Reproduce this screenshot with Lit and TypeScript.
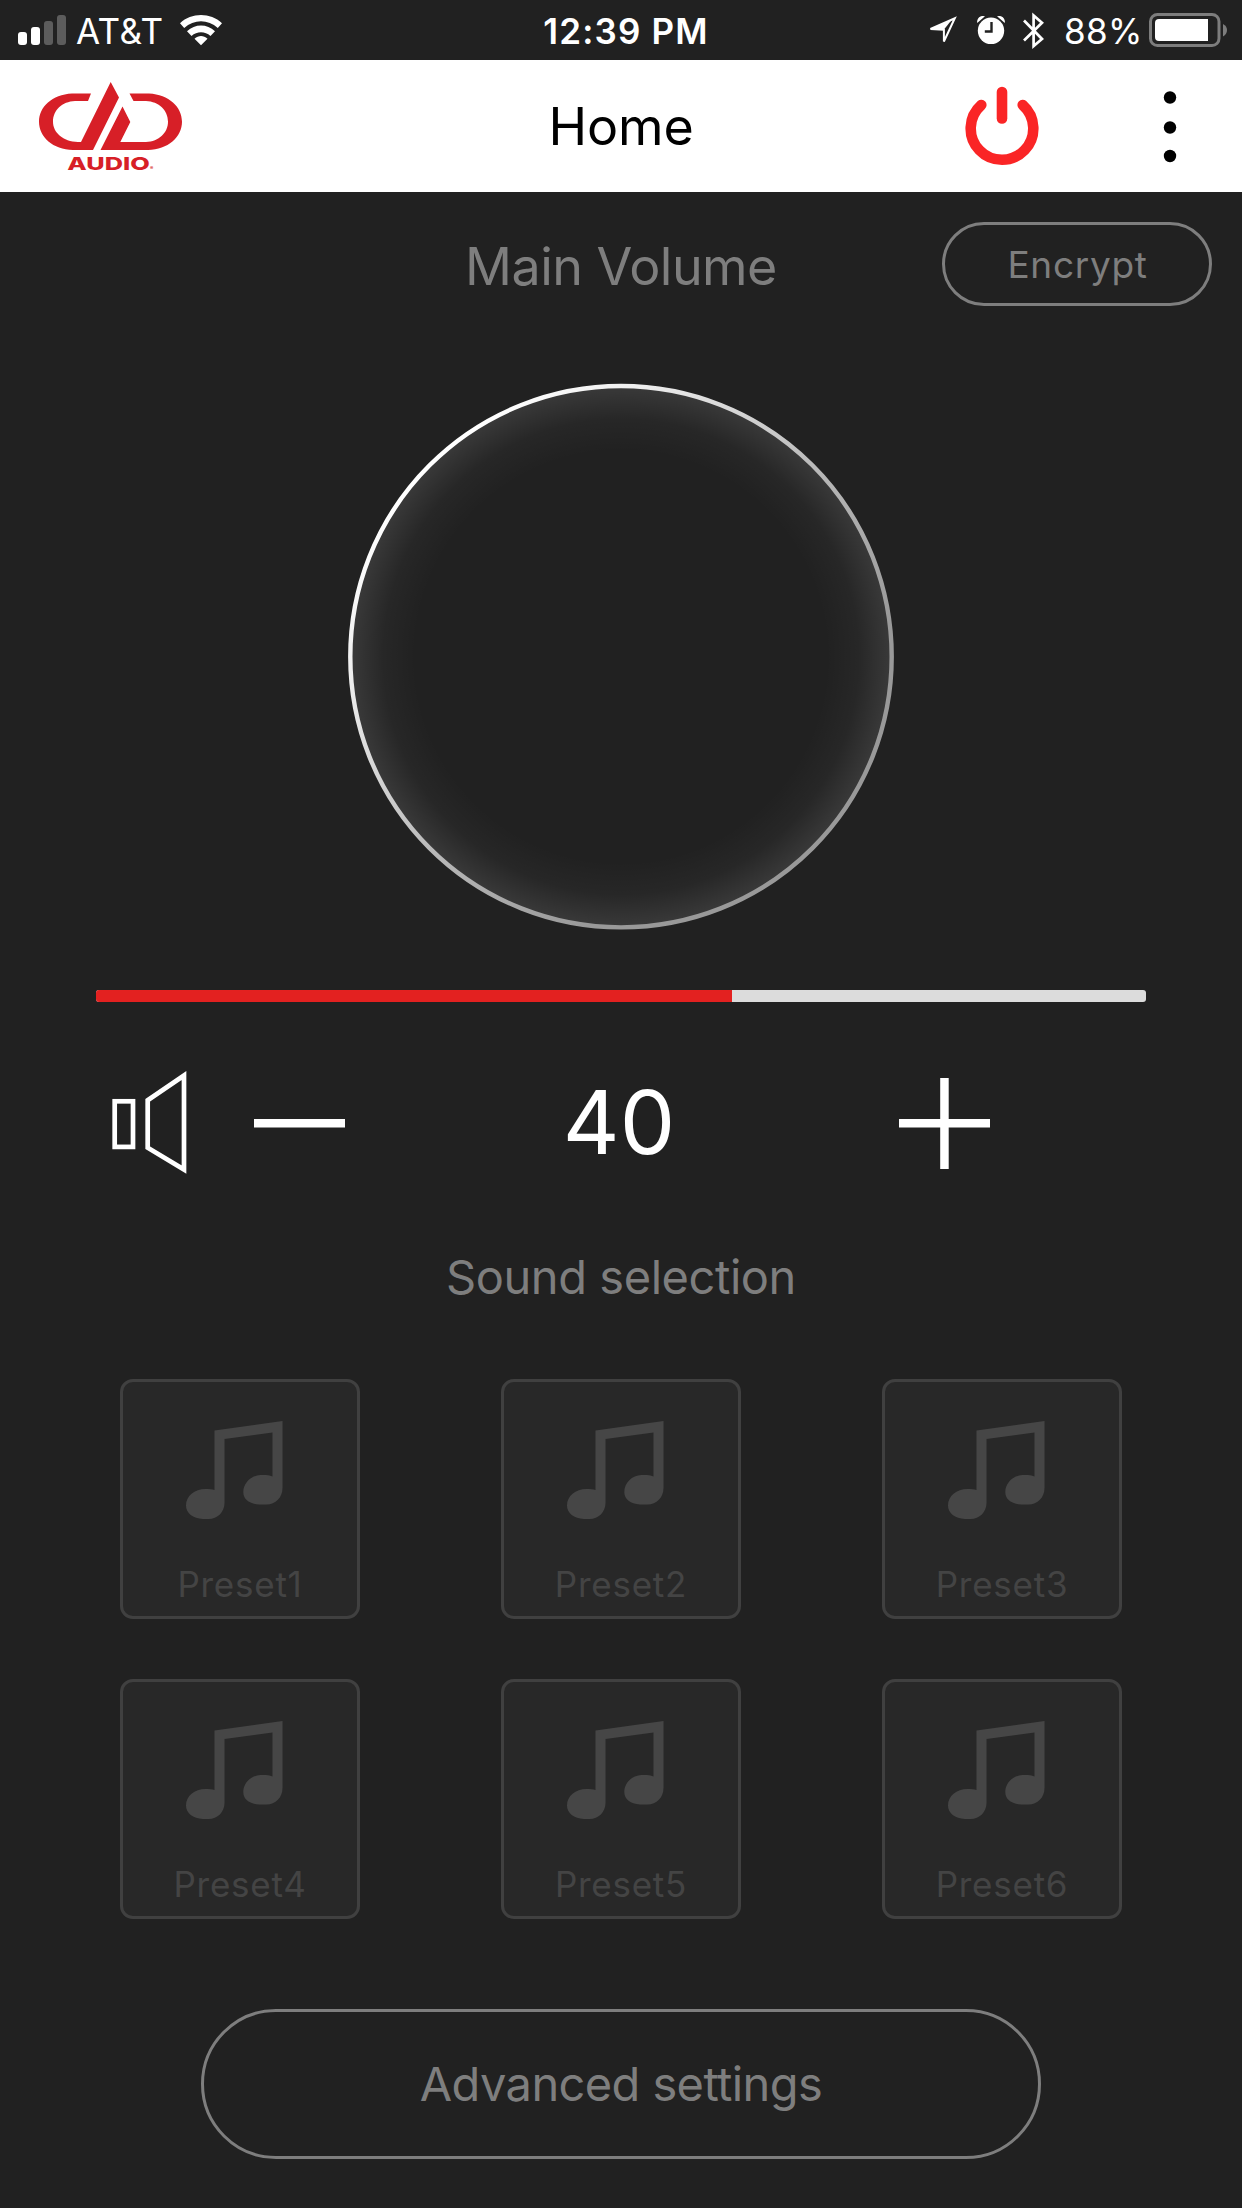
import { LitElement, html, css } from "lit";
import { customElement, property } from "lit/decorators.js";

@customElement("status-bar")
class StatusBar extends LitElement {
  static styles = css`
    :host { display: block; height: 60px; background: #212121; color: #fff; }
    .bar { display: grid; grid-template-columns: 1fr auto 1fr; grid-template-rows: 60px; height: 60px; line-height: 62px; font-size: 35px; }
    .side { display: flex; height: 60px; }
    .left { padding-left: 18px; }
    .right { justify-content: flex-end; padding-right: 15px; }
    svg { display: block; flex: none; }
    .carrier { margin-left: 10px; width: 94px; font-weight: 400; letter-spacing: 0.45px; }
    .time { font-weight: 600; letter-spacing: 1.17px; padding-left: 10px; }
    .pct { width: 84px; font-weight: 400; letter-spacing: 0.3px; text-indent: -1px; }
  `;
  render() {
    return html`<div class="bar">
      <div class="side left">
        <svg width="48" height="60" viewBox="18 0 48 60">
          <rect x="18" y="32" width="9" height="13" rx="3" fill="#fff" />
          <rect x="31" y="27" width="9" height="18" rx="3" fill="#fff" />
          <rect x="44" y="21" width="9" height="24" rx="3" fill="#5c5c5c" />
          <rect x="57" y="15" width="9" height="30" rx="3" fill="#5c5c5c" />
        </svg>
        <span class="carrier">AT&amp;T</span>
        <svg width="52" height="60" viewBox="170 0 52 60" fill="#fff">
          <path d="M180 23.2C191.500 12.300 210.500 12.300 222 23.200L217.800 28C208 19 194 19 184.200 28Z" />
          <path d="M187 31.300C195 23.500 207 23.500 215 31.300L210.500 36C205 31 197 31 191.500 36Z" />
          <path d="M194.500 38.800C198.500 35 203.500 35 207.500 38.800L201 45.300Z" />
        </svg>
      </div>
      <span class="time">12:39 PM</span>
      <div class="side right">
        <svg width="140" height="60" viewBox="925 0 140 60" fill="none" stroke="#fff">
          <path d="M930.500 29L954.800 18.300L943.900 41.500V29.700Z" stroke-width="2" stroke-linejoin="miter" />
          <path d="M930 29L952 19.500L944 29.500Z" fill="#fff" stroke="none" />
          <circle cx="991" cy="30.800" r="13.200" fill="#fff" stroke="none" />
          <path d="M977.200 23A6 6 0 0 1 985 16.200Z M1004.800 23A6 6 0 0 0 997 16.200Z" fill="#fff" stroke="none" />
          <path d="M991.500 22V31.500H984.800" stroke="#212121" stroke-width="2.400" />
          <path d="M1024 20.500L1042 39L1033.600 46V15.500L1042 22.800L1024 40.500" stroke-width="2.700" stroke-linejoin="miter" />
        </svg>
        <span class="pct">88%</span>
        <svg width="78" height="60" viewBox="1149 0 78 60">
          <rect x="1150.500" y="14.500" width="68.500" height="31" rx="7" fill="none" stroke="#7d7d7d" stroke-width="3" />
          <path d="M1159 19H1208V41H1159A4 4 0 0 1 1155 37V23A4 4 0 0 1 1159 19Z" fill="#fff" />
          <path d="M1223 24Q1227 26 1227 30T1223 36.500Z" fill="#7d7d7d" />
        </svg>
      </div>
    </div>`;
  }
}

@customElement("title-bar")
class TitleBar extends LitElement {
  static styles = css`
    :host { display: block; background: #fff; color: #000; }
    .bar { display: grid; grid-template-columns: 1fr auto 1fr; grid-template-rows: 132px; height: 132px; }
    .logo { margin-left: 36px; display: block; }
    .title { font-size: 52px; line-height: 134px; font-weight: 400; letter-spacing: -0.13px; }
    .actions { display: flex; justify-content: flex-end; }
    svg { display: block; }
    .mark { font: 800 17.5px Inter, sans-serif; }
    .reg { font: 700 5px Inter, sans-serif; }
  `;
  render() {
    return html`<div class="bar">
      <svg class="logo" width="150" height="132" viewBox="36 60 150 132" fill="#d71f27">
        <path d="M91 93.500H72C52 94.500 39 107 39 121.700C39 137 53 149.500 73 150H93L119 97.500L110.700 82L81 142H78C63 141.500 53 132.500 53 121.700C53 110.500 62 101.500 75 101H88Z" />
        <path d="M129.500 93.500H149C169 94.500 182 107 182 121.700C182 137 168 149.500 148 150H100.500L122.500 106.500L130.300 122L120.300 142H146C159 141.500 168 132.500 168 121.700C168 110.500 159 101.500 146 101H133.500Z" />
        <text class="mark" x="67.300" y="169.800" textLength="82.500" lengthAdjust="spacingAndGlyphs">AUDIO</text>
        <text class="reg" x="150" y="170">®</text>
      </svg>
      <span class="title">Home</span>
      <div class="actions">
        <svg width="282" height="132" viewBox="960 60 282 132">
          <g fill="none" stroke="#fa2526" stroke-width="10.600" stroke-linecap="round">
            <path d="M981.300 105A31.300 31.300 0 1 0 1022.700 105" />
            <path d="M1002 92V118.500" />
          </g>
          <circle cx="1170" cy="97.500" r="6.200" /><circle cx="1170" cy="127.500" r="6.200" /><circle cx="1170" cy="156" r="6.200" />
        </svg>
      </div>
    </div>`;
  }
}

@customElement("preset-tile")
class PresetTile extends LitElement {
  @property() label = "";
  static styles = css`
    :host { display: block; }
    .tile { box-sizing: border-box; width: 240px; height: 240px; border: 3px solid #404040; border-radius: 13px; background: #282828; color: #444; display: flex; flex-direction: column; align-items: center; }
    svg { display: block; flex: none; margin-top: -3px; }
    .name { font-size: 35px; line-height: 40px; margin-top: 5px; letter-spacing: 0.75px; }
  `;
  render() {
    return html`<div class="tile">
      <svg width="240" height="180" viewBox="0 0 240 180" fill="#464646">
        <path d="M94.500 51.500L162.500 42V109C162.500 118.500 155.500 125.500 146.500 125.500H139C129.500 124.800 123.300 120.500 123.300 113C123.300 104 131 96.200 140.500 96H146C148.500 96.200 150.500 96.700 152.500 97.500V53.500L104.500 60V124C104.500 133 97.500 140 88.500 140H83C73 139.500 66 134 66 126.500C66 117 74.500 110 85.500 110C89 110 92 110.300 94.500 111Z" />
      </svg>
      <span class="name">${this.label}</span>
    </div>`;
  }
}

@customElement("app-root")
class AppRoot extends LitElement {
  @property({ type: Number }) level = 40;
  @property({ type: Number }) maxLevel = 66;
  private presets = [1, 2, 3, 4, 5, 6].map((n) => `Preset${n}`);

  static styles = css`
    :host { display: block; width: 1242px; height: 2208px; overflow: hidden; background: #212121; color: #7e7e7e; font-family: Inter, "Liberation Sans", sans-serif; font-weight: 400; }
    svg { display: block; }
    .head { display: grid; grid-template-columns: 1fr auto 1fr; height: 114px; padding: 30px 30px 0; box-sizing: border-box; }
    .heading { grid-column: 2; font-size: 52px; line-height: 90px; letter-spacing: -0.54px; }
    .pill { box-sizing: border-box; border: 3px solid #7e7e7e; display: flex; align-items: center; justify-content: center; }
    .encrypt { justify-self: end; width: 270px; height: 84px; border-radius: 42px; font-size: 37px; letter-spacing: 0.7px; padding-left: 1px; }
    .dial { margin: 72px auto 0; width: 556px; height: 556px; }
    .track { margin: 56px 96px 0; height: 12px; border-radius: 3px; background: #dcdcdc; overflow: hidden; }
    .fill { height: 12px; background: #e32120; }
    .controls { display: grid; grid-template-columns: 254px 91px 1fr 91px 252px; grid-template-rows: 110px; margin-top: 67px; color: #fff; }
    .value { font-size: 88px; line-height: 106px; text-align: center; padding-right: 6px; }
    .sound { text-align: center; font-size: 47px; line-height: 60px; margin-top: 68px; letter-spacing: -0.44px; }
    .grid { display: grid; grid-template-columns: repeat(3, 240px); column-gap: 141px; row-gap: 60px; margin: 72px 0 0 120px; }
    .advanced { margin: 90px auto 0; width: 840px; height: 150px; border-radius: 75px; font-size: 47px; letter-spacing: -0.6px; padding-bottom: 2px; }
  `;

  render() {
    return html`
      <status-bar></status-bar>
      <title-bar></title-bar>
      <div class="head">
        <span class="heading">Main Volume</span>
        <div class="pill encrypt">Encrypt</div>
      </div>
      <svg class="dial" viewBox="343 378 556 556">
        <defs>
          <linearGradient id="rim" x1="0" y1="0" x2="1" y2="1">
            <stop offset="0.15" stop-color="#fff" /><stop offset="0.27" stop-color="#eee" />
            <stop offset="0.5" stop-color="#bababa" /><stop offset="0.72" stop-color="#999" />
          </linearGradient>
          <radialGradient id="glow">
            <stop offset="0.76" stop-color="#fff" stop-opacity="0" />
            <stop offset="0.88" stop-color="#fff" stop-opacity="0.028" />
            <stop offset="1" stop-color="#fff" stop-opacity="0.11" />
          </radialGradient>
        </defs>
        <circle cx="621" cy="656.700" r="270" fill="url(#glow)" />
        <circle cx="621" cy="656.700" r="270.700" fill="none" stroke="url(#rim)" stroke-width="4.400" />
      </svg>
      <div class="track"><div class="fill" style="width:${(this.level / this.maxLevel) * 100}%"></div></div>
      <div class="controls">
        <svg width="254" height="110" viewBox="0 1069 254 110" fill="none" stroke="#fff" stroke-width="4.700">
          <rect x="114.700" y="1101.300" width="18.300" height="45.600" />
          <path d="M147.700 1100.300L184 1075.500V1169.500L147.700 1147.700Z" />
        </svg>
        <svg width="91" height="110" viewBox="254 1069 91 110" fill="#fff"><rect x="254" y="1119" width="91" height="8.500" /></svg>
        <span class="value">${this.level}</span>
        <svg width="91" height="110" viewBox="899 1069 91 110" fill="#fff">
          <rect x="899" y="1119" width="91" height="8.500" /><rect x="940.200" y="1078" width="8.500" height="91" />
        </svg>
      </div>
      <div class="sound">Sound selection</div>
      <div class="grid">${this.presets.map((p) => html`<preset-tile .label=${p}></preset-tile>`)}</div>
      <div class="pill advanced">Advanced settings</div>
    `;
  }
}
